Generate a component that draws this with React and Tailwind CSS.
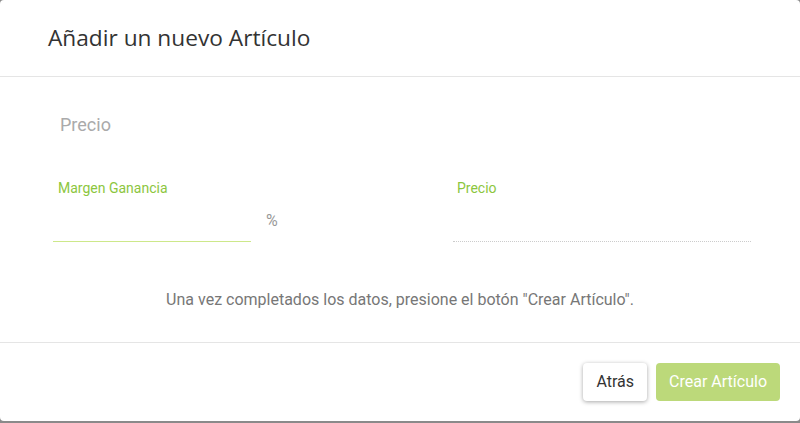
export default function App() {
  return (
    <div className="w-[800px] h-[423px] bg-[#8a8a8a] overflow-hidden">
      <div className="w-[800px] h-[421px] bg-white rounded-[4px] flex flex-col">
        <div className="h-[77px] border-b border-[#e5e5e5] flex items-center pl-[48px] shrink-0">
          <h1 className="text-[22.7px] text-[#333] font-['Open_Sans',sans-serif] pt-[1px]">Añadir un nuevo Artículo</h1>
        </div>
        <div className="h-[266px] border-b border-[#e5e5e5] font-['Roboto',sans-serif] flex flex-col shrink-0">
          <div className="pl-[60px] pt-[36px] text-[18px] text-[#aaa] leading-[24px]">Precio</div>
          <div className="flex pt-[42px]">
            <div className="pl-[53px] w-[400px] flex">
              <div className="w-[198px] flex flex-col">
                <div className="pl-[5px] text-[14px] text-[#8cc63e] leading-[18px]">Margen Ganancia</div>
                <div className="h-[45px] border-b border-[#cde88a]"></div>
              </div>
              <div className="pl-[15px] pt-[30px] text-[16px] text-[#999]">%</div>
            </div>
            <div className="pl-[53px] flex flex-col">
              <div className="pl-[4px] text-[14px] text-[#8cc63e] leading-[18px]">Precio</div>
              <div className="w-[298px] h-[45px] border-b border-dotted border-[#ccc]"></div>
            </div>
          </div>
          <div className="text-center pt-[46px] text-[16px] text-[#777]">
            Una vez completados los datos, presione el botón "Crear Artículo".
          </div>
        </div>
        <div className="flex justify-end items-start pt-[20px] pr-[20px] gap-[9px] font-['Roboto',sans-serif]">
          <button className="h-[38px] px-[13px] bg-white rounded-[4px] text-[16px] text-[#333] shadow-[0_1px_4px_rgba(0,0,0,0.35)]">Atrás</button>
          <button className="h-[38px] px-[13px] bg-[#bcd97a] rounded-[4px] text-[16px] text-white">Crear Artículo</button>
        </div>
      </div>
    </div>
  );
}
